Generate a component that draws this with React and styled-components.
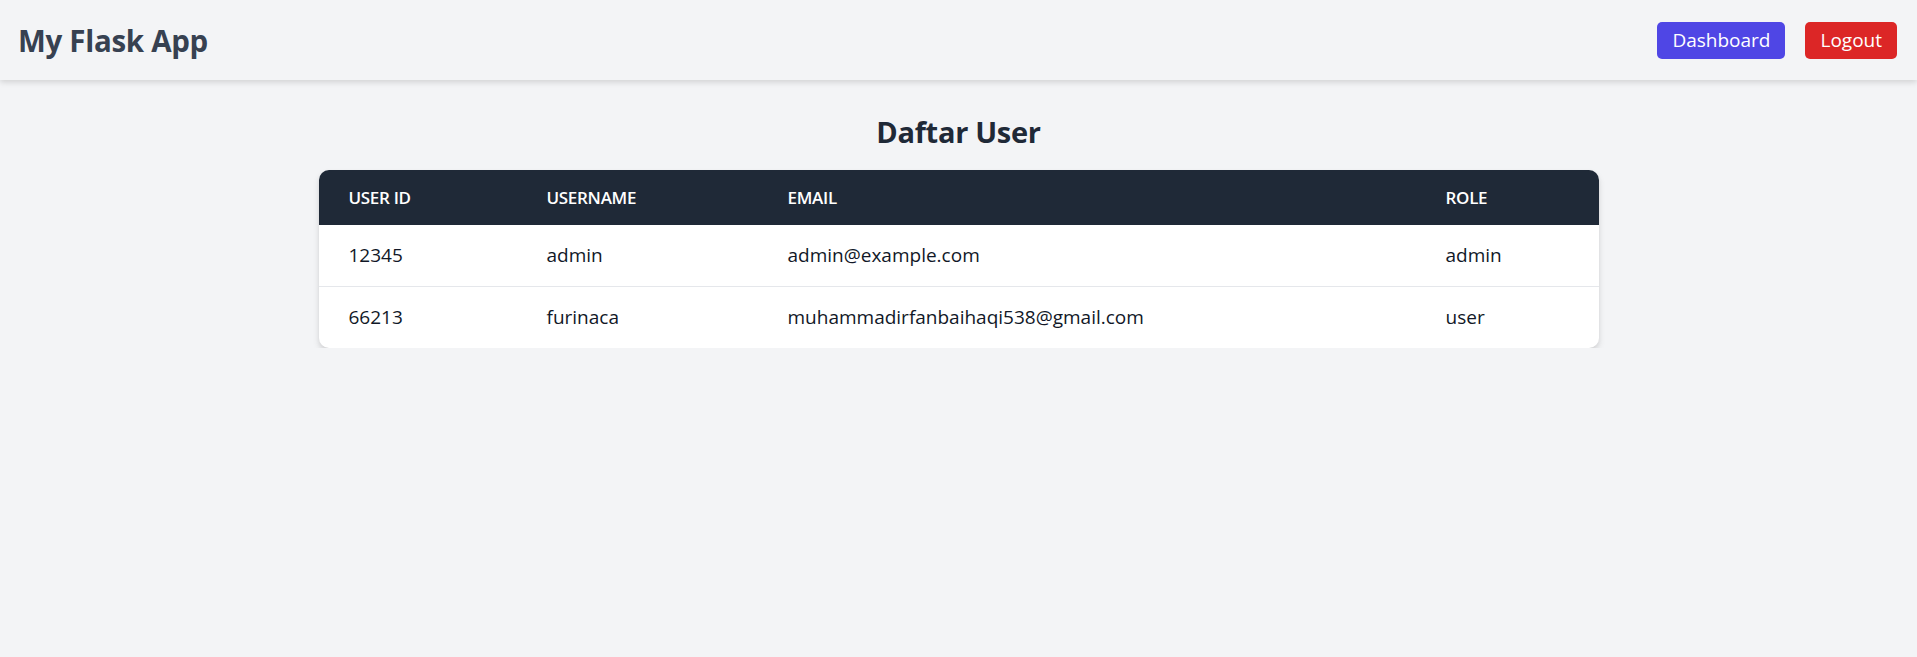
import React from "react";
import styled, { createGlobalStyle } from "styled-components";

const Global = createGlobalStyle`
  html, body {
    margin: 0;
    padding: 0;
    background: #f3f4f6;
    font-family: "Open Sans", "Noto Sans", sans-serif;
  }
`;

const Nav = styled.nav`
  height: 80px;
  box-sizing: border-box;
  display: flex;
  align-items: center;
  justify-content: space-between;
  padding: 0 20px 0 18px;
  background: #f3f4f6;
  box-shadow: 0 2px 6px rgba(0, 0, 0, 0.15);
`;

const Brand = styled.div`
  font-size: 29.5px;
  font-weight: 700;
  color: #374151;
  letter-spacing: -0.3px;
`;

const Actions = styled.div`
  display: flex;
  gap: 20px;
`;

const Button = styled.a`
  display: inline-flex;
  align-items: center;
  height: 37px;
  padding: 0 15px;
  border-radius: 5px;
  font-size: 19px;
  color: #fff;
  text-decoration: none;
  background: ${(p) => (p.$danger ? "#dc2626" : "#4f46e5")};
`;

const Main = styled.main`
  display: flex;
  flex-direction: column;
  align-items: center;
  padding-top: 32px;
`;

const Heading = styled.h1`
  margin: 0 0 18px;
  font-size: 29px;
  line-height: 40px;
  font-weight: 700;
  color: #1f2937;
  letter-spacing: -0.3px;
`;

const Card = styled.div`
  width: 1280px;
  border-radius: 10px;
  overflow: hidden;
  background: #fff;
  box-shadow: 0 4px 7px rgba(0, 0, 0, 0.1), 0 2px 4px rgba(0, 0, 0, 0.06);
`;

const Table = styled.table`
  width: 100%;
  border-collapse: collapse;
  table-layout: fixed;
`;

const Head = styled.th`
  box-sizing: border-box;
  width: ${(p) => p.$w}px;
  text-align: left;
  padding: 15px 30px;
  background: #1f2937;
  color: #fff;
  font-size: 17px;
  line-height: 25px;
  font-weight: 600;
  text-transform: uppercase;
  letter-spacing: -0.3px;
`;

const Row = styled.tr`
  & + & td {
    border-top: 1px solid #e5e7eb;
  }
`;

const Cell = styled.td`
  padding: 15px 30px;
  font-size: 19px;
  line-height: 31px;
  color: #111827;
`;

const users = [
  { id: "12345", name: "admin", email: "admin@example.com", role: "admin" },
  {
    id: "66213",
    name: "furinaca",
    email: "muhammadirfanbaihaqi538@gmail.com",
    role: "user",
  },
];

export default function App() {
  return (
    <>
      <Global />
      <Nav>
        <Brand>My Flask App</Brand>
        <Actions>
          <Button href="#">Dashboard</Button>
          <Button href="#" $danger>
            Logout
          </Button>
        </Actions>
      </Nav>
      <Main>
        <Heading>Daftar User</Heading>
        <Card>
          <Table>
            <thead>
              <tr>
                <Head $w={198}>User ID</Head>
                <Head $w={241}>Username</Head>
                <Head $w={658}>Email</Head>
                <Head $w={183}>Role</Head>
              </tr>
            </thead>
            <tbody>
              {users.map((u) => (
                <Row key={u.id}>
                  <Cell>{u.id}</Cell>
                  <Cell>{u.name}</Cell>
                  <Cell>{u.email}</Cell>
                  <Cell>{u.role}</Cell>
                </Row>
              ))}
            </tbody>
          </Table>
        </Card>
      </Main>
    </>
  );
}
